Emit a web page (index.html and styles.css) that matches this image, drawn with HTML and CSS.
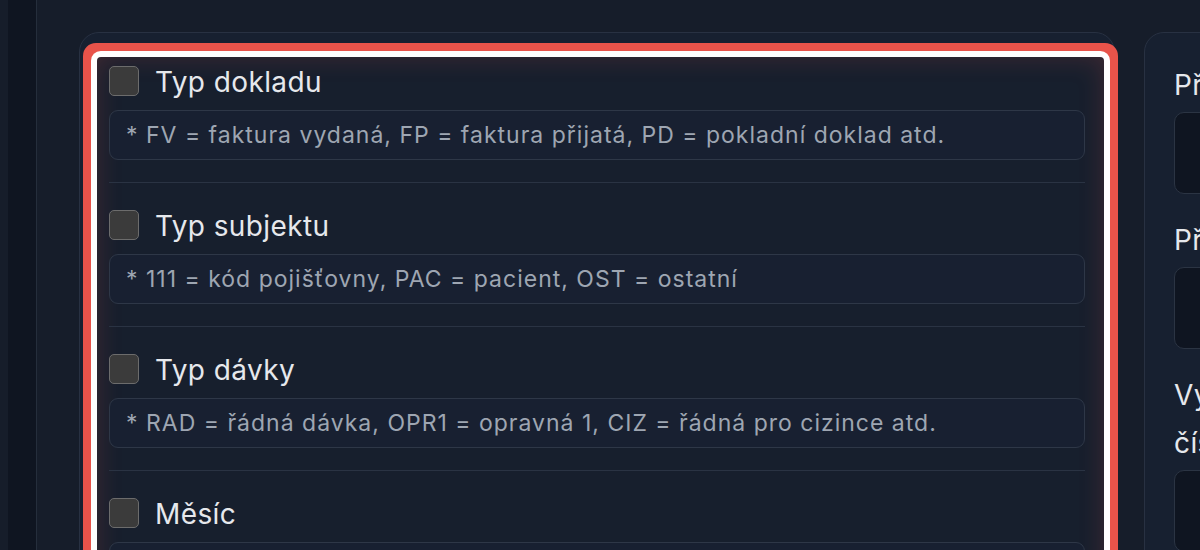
FILE: index.html
```html
<!DOCTYPE html>
<html lang="cs">
<head>
<meta charset="utf-8">
<title>Nastavení exportu</title>
<link rel="stylesheet" href="styles.css">
</head>
<body>
<div class="app">
  <aside class="sidebar"><div class="sidebar-inner"></div></aside>
  <main class="content">
    <section class="card card-main">
      <div class="field-list">
        <div class="field">
          <label class="field-head"><span class="checkbox"></span><span class="field-label">Typ dokladu</span></label>
          <div class="hint-input">* FV = faktura vydaná, FP = faktura přijatá, PD = pokladní doklad atd.</div>
        </div>
        <div class="field">
          <label class="field-head"><span class="checkbox"></span><span class="field-label">Typ subjektu</span></label>
          <div class="hint-input">* 111 = kód pojišťovny, PAC = pacient, OST = ostatní</div>
        </div>
        <div class="field">
          <label class="field-head"><span class="checkbox"></span><span class="field-label">Typ dávky</span></label>
          <div class="hint-input">* RAD = řádná dávka, OPR1 = opravná 1, CIZ = řádná pro cizince atd.</div>
        </div>
        <div class="field">
          <label class="field-head"><span class="checkbox"></span><span class="field-label">Měsíc</span></label>
          <div class="hint-input">* 01 – 12</div>
        </div>
      </div>
    </section>
    <section class="card card-side">
      <div class="side-label">Předpona</div>
      <div class="side-box"></div>
      <div class="side-label">Přípona</div>
      <div class="side-box"></div>
      <div class="side-label">Vyplnit nulami do počtu<br>číslic</div>
      <div class="side-box"></div>
    </section>
  </main>
</div>
</body>
</html>
```

FILE: styles.css
```css
html, body {
  margin: 0;
  padding: 0;
  width: 1200px;
  height: 550px;
  overflow: hidden;
  background: #161d2a;
  font-family: Inter, "Noto Sans", sans-serif;
}

.app {
  display: flex;
  height: 550px;
}

.sidebar {
  flex: none;
  width: 37px;
  padding-left: 8px;
  box-sizing: border-box;
  border-right: 1px solid #252e3c;
  background: #161d2a;
}

.sidebar-inner {
  height: 100%;
  background: #0f1521;
}

.content {
  flex: none;
  display: flex;
  align-items: flex-start;
  gap: 29px;
  padding: 32px 0 0 42px;
}

.card {
  flex: none;
  background: #172030;
  border: 1px solid #283142;
  border-radius: 20px;
  box-sizing: border-box;
}

.card-main {
  width: 1036px;
  padding: 24px 10px 0 17px;
  height: 700px;
}

.field-list {
  background: #171f2d;
  border-radius: 4px;
  padding: 9px 19px 0 12px;
  box-shadow:
    0 0 0 6px #ffffff,
    0 0 0 14px #e8534a,
    inset 0 0 26px rgba(232, 83, 74, 0.2);
}

.field {
  padding-bottom: 22px;
}

.field + .field {
  border-top: 1px solid #2a3343;
  padding-top: 27px;
}

.field-head {
  display: flex;
  align-items: center;
  gap: 16px;
  height: 30px;
  margin-bottom: 14px;
}

.checkbox {
  flex: none;
  width: 30px;
  height: 30px;
  box-sizing: border-box;
  background: #3b3b3b;
  border: 1.5px solid #6c6c6c;
  border-radius: 5px;
}

.field-label {
  font-size: 28px;
  color: #e6e8ec;
  letter-spacing: 0.4px;
  line-height: 30px;
  position: relative;
  top: 1px;
}

.hint-input {
  height: 50px;
  box-sizing: border-box;
  border: 1px solid #2e3747;
  border-radius: 9px;
  background: #182031;
  padding: 0 16px;
  display: flex;
  align-items: center;
  font-size: 23px;
  color: #9ea6b2;
  letter-spacing: 1px;
}

.card-side {
  width: 400px;
  height: 700px;
  padding: 28px 29px 0 29px;
}

.side-label {
  font-size: 28px;
  letter-spacing: 0.4px;
  line-height: 48px;
  color: #e6e8ec;
  margin-bottom: 3px;
  white-space: nowrap;
}

.side-box {
  height: 82px;
  box-sizing: border-box;
  background: #0f1521;
  border: 1px solid #2b3443;
  border-radius: 10px;
  margin-bottom: 22px;
}
```
